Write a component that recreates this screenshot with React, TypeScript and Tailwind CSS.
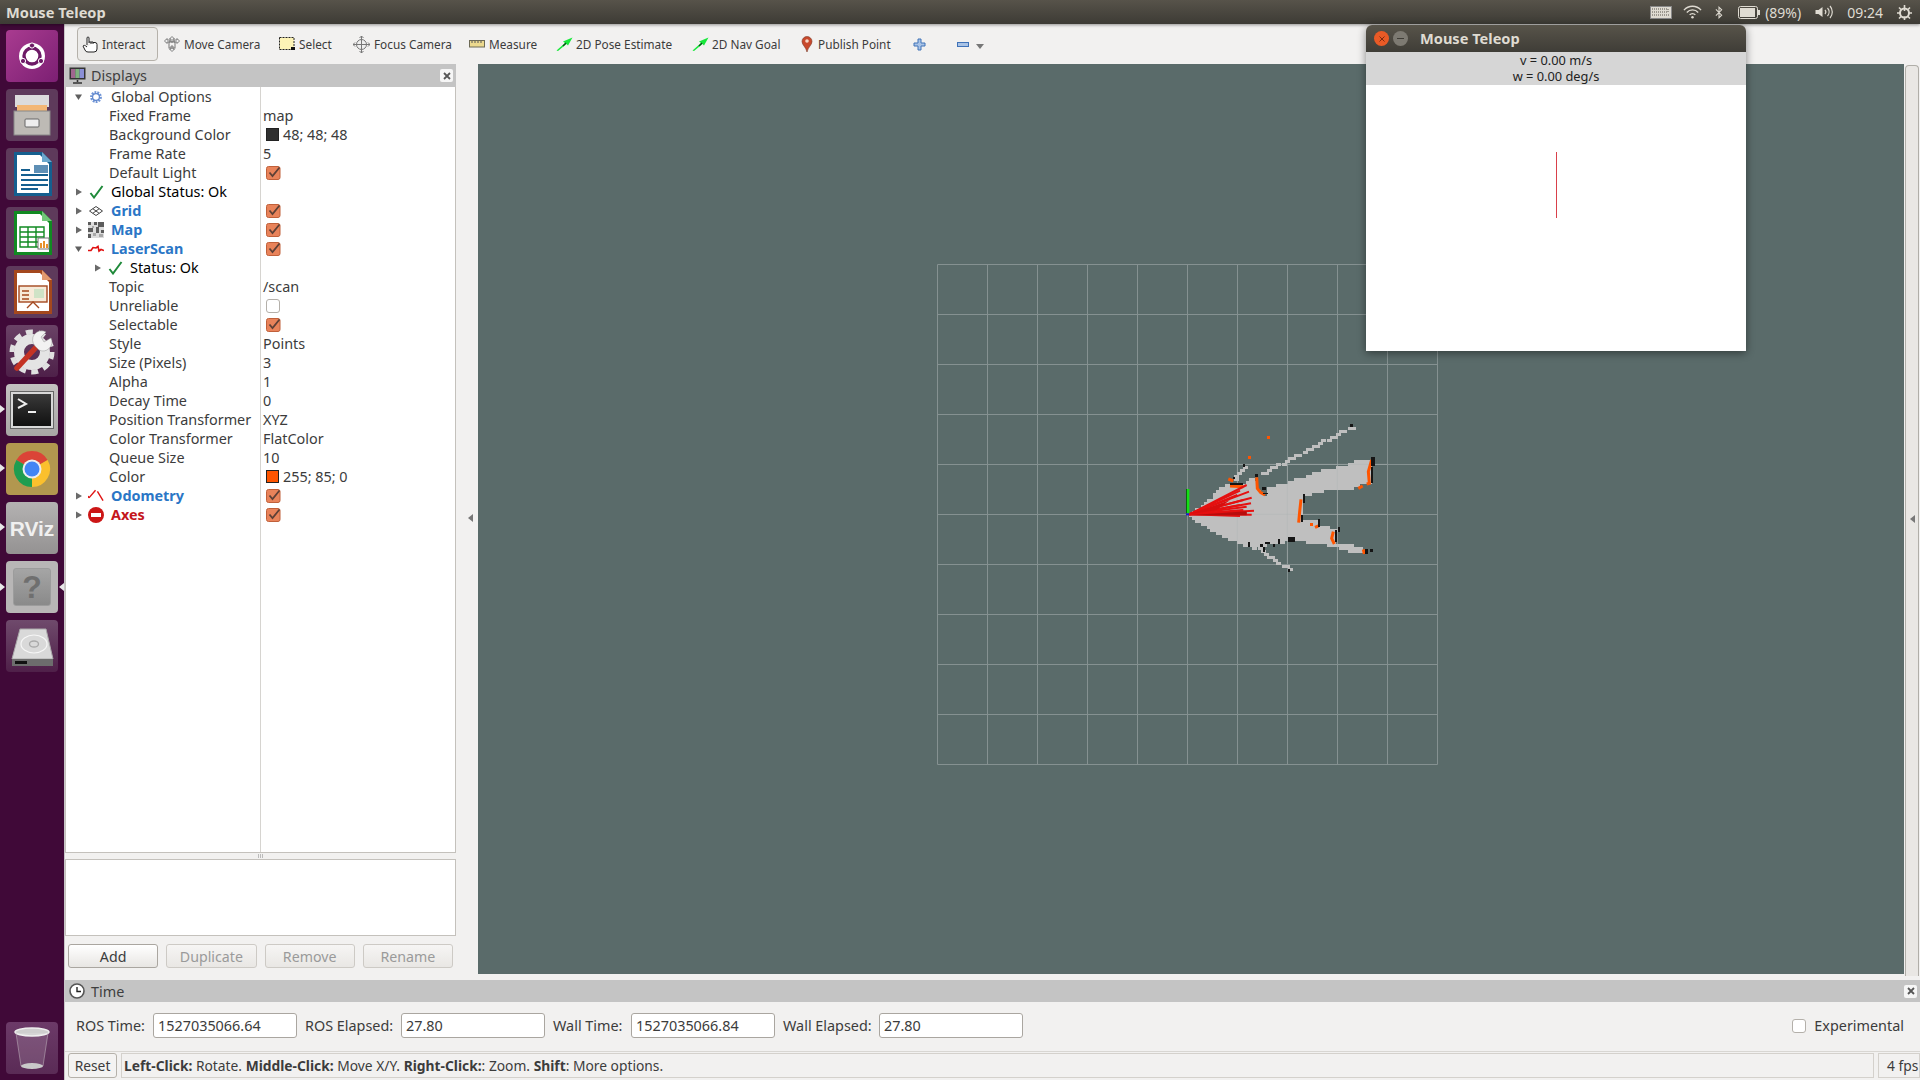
import type { ReactNode } from "react";

const FONT = "font-['Noto_Sans','Open_Sans',sans-serif]";

function Chk({ on = true }: { on?: boolean }) {
  if (!on)
    return <span className="block w-[14px] h-[14px] rounded-[3px] border border-[#b4b0aa] bg-white" />;
  return (
    <svg width="16" height="16" viewBox="0 0 16 16" className="block">
      <rect x="0.5" y="1.5" width="13.5" height="13" rx="2" fill="#e9835a" stroke="#c0603a" />
      <path d="M3.5 7.5 L6.5 11 L13.5 2.5" fill="none" stroke="#5e4036" strokeWidth="1.8" />
    </svg>
  );
}

function Arrow({ open }: { open?: boolean }) {
  return (
    <svg width="8" height="8" viewBox="0 0 8 8" className="block">
      {open ? <path d="M0 1.5 H7 L3.5 7 Z" fill="#5f5f5f" /> : <path d="M1 0.5 V7.5 L7 4 Z" fill="#6a6a6a" />}
    </svg>
  );
}

function CheckMark() {
  return (
    <svg width="15" height="14" viewBox="0 0 15 14" className="block">
      <path d="M1.5 8 L5 12.5 L13.5 1" fill="none" stroke="#1f8a3a" strokeWidth="2" />
    </svg>
  );
}

function GearIcon() {
  return (
    <svg width="14" height="14" viewBox="0 0 14 14" className="block">
      <circle cx="7" cy="7" r="4.6" fill="none" stroke="#6f94d6" strokeWidth="2.6" strokeDasharray="1.8 1" />
      <circle cx="7" cy="7" r="3.4" fill="none" stroke="#5d85cc" strokeWidth="1.2" />
    </svg>
  );
}

function GridIcon() {
  return (
    <svg width="14" height="10" viewBox="0 0 14 10" className="block">
      <path d="M7 .5 L13.5 5 L7 9.5 L.5 5 Z M3.8 2.7 L10.2 7.3 M10.2 2.7 L3.8 7.3" fill="none" stroke="#444" strokeWidth="1" />
    </svg>
  );
}

function MapIcon() {
  return (
    <svg width="16" height="16" viewBox="0 0 16 16" className="block" shapeRendering="crispEdges">
      <rect width="16" height="16" fill="#dcdcdc" />
      <path d="M0 0h3v3H0zM6 0h3v3H6zM10 0h6v5h-6zM0 6h5v4H0zM8 5h3v6H8zM0 12h3v4H0zM13 8h3v3h-3z" fill="#5c5c5c" />
      <path d="M4 4h2v2H4zM5 11h3v3H5zM11 12h4v3h-4z" fill="#a8a8a8" />
    </svg>
  );
}

function LaserIcon() {
  return (
    <svg width="16" height="8" viewBox="0 0 16 8" className="block">
      <path d="M0 5.5 H3 L5 2.5 L8 3 L10 1.5 L11 6 L13 4.5 L16 5.5" fill="none" stroke="#e01010" strokeWidth="1.6" />
    </svg>
  );
}

function OdomIcon() {
  return (
    <svg width="17" height="13" viewBox="0 0 17 13" className="block">
      <path d="M1 9 L8 1 M1 9 L0 7 M10 2 L16 12" fill="none" stroke="#e01414" strokeWidth="1.5" />
    </svg>
  );
}

function StopIcon() {
  return (
    <svg width="16" height="16" viewBox="0 0 16 16" className="block">
      <circle cx="8" cy="8" r="8" fill="#cc1616" />
      <rect x="3" y="6" width="10" height="4" fill="#fff" />
    </svg>
  );
}

type Row = {
  label: string;
  value?: string;
  swatch?: string;
  check?: boolean;
  arrow?: "open" | "closed";
  indent?: number;
  icon?: ReactNode;
  tone?: "plain" | "blue" | "red" | "dark";
};

const rows: Row[] = [
  { label: "Global Options", arrow: "open", icon: <GearIcon />, tone: "plain" },
  { label: "Fixed Frame", value: "map", indent: 1 },
  { label: "Background Color", value: "48; 48; 48", swatch: "#303030", indent: 1 },
  { label: "Frame Rate", value: "5", indent: 1 },
  { label: "Default Light", check: true, indent: 1 },
  { label: "Global Status: Ok", arrow: "closed", icon: <CheckMark />, tone: "dark" },
  { label: "Grid", arrow: "closed", icon: <GridIcon />, tone: "blue", check: true },
  { label: "Map", arrow: "closed", icon: <MapIcon />, tone: "blue", check: true },
  { label: "LaserScan", arrow: "open", icon: <LaserIcon />, tone: "blue", check: true },
  { label: "Status: Ok", arrow: "closed", icon: <CheckMark />, tone: "dark", indent: 2 },
  { label: "Topic", value: "/scan", indent: 1 },
  { label: "Unreliable", check: false, indent: 1 },
  { label: "Selectable", check: true, indent: 1 },
  { label: "Style", value: "Points", indent: 1 },
  { label: "Size (Pixels)", value: "3", indent: 1 },
  { label: "Alpha", value: "1", indent: 1 },
  { label: "Decay Time", value: "0", indent: 1 },
  { label: "Position Transformer", value: "XYZ", indent: 1 },
  { label: "Color Transformer", value: "FlatColor", indent: 1 },
  { label: "Queue Size", value: "10", indent: 1 },
  { label: "Color", value: "255; 85; 0", swatch: "#ff5500", indent: 1 },
  { label: "Odometry", arrow: "closed", icon: <OdomIcon />, tone: "blue", check: true },
  { label: "Axes", arrow: "closed", icon: <StopIcon />, tone: "red", check: true },
];

function TreeRow({ r }: { r: Row }) {
  let labelCls = "text-[#3c3c3c]";
  if (r.tone === "blue") labelCls = "font-bold text-[#2a76c6]";
  if (r.tone === "red") labelCls = "font-bold text-[#c4161c]";
  if (r.tone === "dark") labelCls = "text-black";
  return (
    <div className="flex h-[19px] items-center">
      <div className="flex w-[194px] shrink-0 items-center h-full overflow-hidden">
        {r.indent === 1 ? (
          <span className="pl-[43px] whitespace-nowrap">{r.label}</span>
        ) : (
          <>
            <span className={`${r.indent === 2 ? "ml-[28px]" : "ml-[9px]"} w-[8px]`}>
              {r.arrow && <Arrow open={r.arrow === "open"} />}
            </span>
            <span className="ml-[5px] w-[16px] flex justify-center">{r.icon}</span>
            <span className={`ml-[7px] whitespace-nowrap ${labelCls}`}>{r.label}</span>
          </>
        )}
      </div>
      <div className="flex items-center pl-[3px] h-full whitespace-nowrap">
        {r.swatch && (
          <span className={`${r.swatch === "#303030" ? "bg-[#303030]" : "bg-[#ff5500]"} block w-[13px] h-[13px] border border-[#222] ml-[3px] mr-[4px]`} />
        )}
        {r.value}
        {r.check !== undefined && (
          <span className="ml-[3px]">
            <Chk on={r.check} />
          </span>
        )}
      </div>
    </div>
  );
}

function ToolBtn({ icon, label, w, gap }: { icon: ReactNode; label: string; w: string; gap: string }) {
  return (
    <div className={`flex items-center h-[34px] shrink-0 whitespace-nowrap ${w} ${gap}`}>
      {icon}
      <span>{label}</span>
    </div>
  );
}

function HandIcon() {
  return (
    <svg width="17" height="17" viewBox="0 0 17 17" className="block">
      <path d="M5 9 V2 a1 1 0 0 1 2 0 V7 M7 6 h2 V8 M9 6 h2 V8 M11 6.5 h2 a2 2 0 0 1 2 2 V13 a3 3 0 0 1-3 3 H6 a3 3 0 0 1-3-2 L1 10 c.5-1 2-1 4 1" fill="#fff" stroke="#222" strokeWidth="1" />
    </svg>
  );
}

function MoveIcon() {
  return (
    <svg width="16" height="16" viewBox="0 0 16 16" className="block">
      <path d="M8 .5 L10.5 3 H9 V6 H7 V3 H5.5 Z M8 15.5 L5.5 13 H7 V10 H9 V13 H10.5 Z M.5 5 L3 2.5 V4 H6 V6 H3 V7.5 Z M15.5 5 L13 7.5 V6 H10 V4 H13 V2.5 Z" fill="#eee" stroke="#666" strokeWidth=".8" />
      <rect x="5" y="6" width="6" height="6" fill="none" stroke="#777" />
    </svg>
  );
}

function SelectIcon() {
  return (
    <svg width="16" height="14" viewBox="0 0 16 14" className="block">
      <rect x=".5" y=".5" width="14.5" height="12" fill="#fdf3b6" stroke="#222" strokeDasharray="2 1" />
      <rect x="12" y="10" width="4" height="3" fill="#111" />
    </svg>
  );
}

function FocusIcon() {
  return (
    <svg width="17" height="17" viewBox="0 0 17 17" className="block">
      <circle cx="8.5" cy="8.5" r="5" fill="#eee" stroke="#777" />
      <path d="M8.5 0 V17 M0 8.5 H17" stroke="#777" strokeWidth="1" />
      <path d="M6.5 2 L8.5 0 L10.5 2 M6.5 15 L8.5 17 L10.5 15 M2 6.5 L0 8.5 L2 10.5 M15 6.5 L17 8.5 L15 10.5" fill="none" stroke="#777" />
    </svg>
  );
}

function RulerIcon() {
  return (
    <svg width="16" height="8" viewBox="0 0 16 8" className="block">
      <rect x=".5" y=".5" width="15" height="6.5" fill="#ecd98e" stroke="#6d6a55" />
      <path d="M3 1 V3 M6 1 V3 M9 1 V3 M12 1 V3" stroke="#555" />
    </svg>
  );
}

function GreenArrow() {
  return (
    <svg width="17" height="14" viewBox="0 0 17 14" className="block">
      <path d="M0.5 13.5 L9 6 L7 4.5 L16.5 .5 L12 8.5 L10.5 7 L2 14 Z" fill="#17e83a" />
      <path d="M7 9 L10 6" stroke="#0a4a18" strokeWidth="1.2" />
    </svg>
  );
}

function PinIcon() {
  return (
    <svg width="12" height="16" viewBox="0 0 12 16" className="block">
      <path d="M6 16 C5 11 1 9 1 5.5 A5 5 0 0 1 11 5.5 C11 9 7 11 6 16 Z" fill="#c8492c" stroke="#7d3a28" strokeWidth=".6" />
      <circle cx="6" cy="5" r="1.8" fill="#f6d9c8" />
    </svg>
  );
}

function FlatBtn({ label, on }: { label: string; on?: boolean }) {
  return (
    <div
      className={
        on
          ? "flex-1 h-[24px] flex items-center justify-center rounded-[3px] border border-[#aaa6a0] bg-gradient-to-b from-white to-[#e8e6e3] text-[#3c3c3c]"
          : "flex-1 h-[24px] flex items-center justify-center rounded-[3px] border border-[#cdcac5] bg-gradient-to-b from-[#f6f5f4] to-[#e9e7e4] text-[#9a9a9a]"
      }
    >
      {label}
    </div>
  );
}

function TimeField({ label, value, lw }: { label: string; value: string; lw: string }) {
  return (
    <>
      <span className={`whitespace-nowrap ${lw}`}>{label}</span>
      <span className="w-[144px] h-[25px] flex items-center pl-[4px] rounded-[3px] border border-[#aaa6a0] bg-white">{value}</span>
    </>
  );
}

function Panel({ children, cls }: { children: ReactNode; cls: string }) {
  return <div className={`w-[52px] h-[52px] shrink-0 rounded-[4px] flex items-center justify-center overflow-hidden ${cls}`}>{children}</div>;
}

function Launcher() {
  return (
    <div className="w-[65px] shrink-0 flex flex-col items-center pt-[6px] bg-[#400938] border-r border-r-[#c9c6c8] relative">
      <div className="flex flex-col gap-[7px]">
        <Panel cls="bg-gradient-to-br from-[#a93b90] to-[#7c1f73]">
          <svg width="44" height="44" viewBox="0 0 44 44">
            <circle cx="22" cy="22" r="13" fill="#fff" />
            <circle cx="22" cy="22" r="8" fill="none" stroke="#6d1a66" strokeWidth="3.4" />
            <circle cx="22" cy="11.5" r="2.6" fill="#6d1a66" stroke="#fff" />
            <circle cx="13" cy="27" r="2.6" fill="#6d1a66" stroke="#fff" />
            <circle cx="31" cy="27" r="2.6" fill="#6d1a66" stroke="#fff" />
          </svg>
        </Panel>
        <Panel cls="bg-[#5e3a5b]">
          <svg width="44" height="44" viewBox="0 0 44 44">
            <rect x="5" y="2" width="34" height="12" fill="#dcdcdc" />
            <rect x="7" y="12" width="30" height="10" fill="#f3b775" />
            <rect x="4" y="18" width="36" height="24" fill="#bdbab5" stroke="#888" />
            <rect x="15" y="26" width="14" height="8" rx="1" fill="#eee" stroke="#666" />
          </svg>
        </Panel>
        <Panel cls="bg-[#5e3a5b]">
          <svg width="44" height="48" viewBox="0 0 44 48">
            <path d="M4 2 H32 L42 12 V46 H4 Z" fill="#155f8f" />
            <path d="M7 5 H30 L39 14 V43 H7 Z" fill="#fff" />
            <path d="M32 2 L42 12 H32 Z" fill="#6aa7cc" />
            <path d="M11 20 H20 M11 25 H38 M11 30 H38 M11 35 H38 M11 39 H28" stroke="#155f8f" strokeWidth="2" />
            <rect x="24" y="15" width="14" height="8" fill="#5e8fb5" />
          </svg>
        </Panel>
        <Panel cls="bg-[#5e3a5b]">
          <svg width="44" height="48" viewBox="0 0 44 48">
            <path d="M4 2 H32 L42 12 V46 H4 Z" fill="#118a22" />
            <path d="M7 5 H30 L39 14 V43 H7 Z" fill="#fff" />
            <path d="M32 2 L42 12 H32 Z" fill="#70c778" />
            <path d="M10 18 H34 V38 H10 Z M10 23 H34 M10 28 H34 M10 33 H34 M18 18 V38 M26 18 V38" fill="none" stroke="#118a22" strokeWidth="1.4" />
            <rect x="28" y="29" width="11" height="11" fill="#fff" stroke="#777" />
            <path d="M31 39 V34 M34 39 V32 M37 39 V35" stroke="#e8912c" strokeWidth="2" />
          </svg>
        </Panel>
        <Panel cls="bg-[#5e3a5b]">
          <svg width="44" height="48" viewBox="0 0 44 48">
            <path d="M4 2 H32 L42 12 V46 H4 Z" fill="#a4481e" />
            <path d="M7 5 H30 L39 14 V43 H7 Z" fill="#fff" />
            <path d="M32 2 L42 12 H32 Z" fill="#e39a6e" />
            <rect x="9" y="18" width="28" height="16" fill="#f7ead9" stroke="#a4481e" strokeWidth="1.4" />
            <path d="M12 23 H19 M12 27 H19 M12 31 H19 M17 40 L23 34 L29 40" stroke="#a4481e" strokeWidth="1.4" fill="none" />
            <rect x="24" y="21" width="10" height="9" fill="#cfe3c6" />
          </svg>
        </Panel>
        <Panel cls="bg-gradient-to-b from-[#6a4266] to-[#4e2049]">
          <svg width="48" height="48" viewBox="0 0 48 48">
            <circle cx="24" cy="25" r="13" fill="none" stroke="#e4e4e4" strokeWidth="10" />
            <circle cx="24" cy="25" r="20" fill="none" stroke="#e0e0e0" strokeWidth="5" strokeDasharray="7 5.5" />
            <path d="M9 41 L31 17" stroke="#c43324" strokeWidth="5.5" strokeLinecap="round" />
            <path d="M27 19 A9 9 0 0 1 38 5 L33 10 L36 15 L43 11 A9 9 0 0 1 31 23 Z" fill="#f2f2f2" stroke="#999" strokeWidth=".5" />
          </svg>
        </Panel>
        <Panel cls="bg-gradient-to-b from-[#c4c2c1] to-[#a8a6a5]">
          <div className="w-[42px] h-[36px] bg-gradient-to-b from-[#3a3a3a] to-[#111] border-2 border-[#d8d8d8] shadow-[0_0_0_1px_#666] flex items-start">
            <svg width="38" height="32" viewBox="0 0 38 32">
              <path d="M5 5 L13 10 L5 14" fill="none" stroke="#eee" strokeWidth="2" />
              <path d="M15 18 H23" stroke="#eee" strokeWidth="2" />
            </svg>
          </div>
        </Panel>
        <Panel cls="bg-[#b2974f]">
          <svg width="44" height="44" viewBox="0 0 44 44">
            <path d="M22 22 L6.4 13 A18 18 0 0 1 37.6 13 Z" fill="#db4437" />
            <path d="M22 22 L37.6 13 A18 18 0 0 1 22 40 Z" fill="#fbc02d" />
            <path d="M22 22 L22 40 A18 18 0 0 1 6.4 13 Z" fill="#1f9d50" />
            <circle cx="22" cy="22" r="9.5" fill="#eee" />
            <circle cx="22" cy="22" r="7.5" fill="#4285f4" />
          </svg>
        </Panel>
        <Panel cls="bg-gradient-to-b from-[#b4b2b2] to-[#949292]">
          <span className="text-[21px] leading-none font-bold text-[#f0f0f0] font-['Liberation_Sans',sans-serif]">RViz</span>
        </Panel>
        <Panel cls="bg-[#b8b6b6]">
          <div className="w-[38px] h-[38px] rounded-[3px] bg-gradient-to-b from-[#a5a5a5] to-[#8a8a8a] border border-[#9c9c9c] flex items-center justify-center text-[32px] leading-none font-bold text-[#6f6f6f] font-['Liberation_Sans',sans-serif]">
            ?
          </div>
        </Panel>
        <Panel cls="bg-gradient-to-b from-[#6f4a6c] to-[#4f2049]">
          <svg width="46" height="44" viewBox="0 0 46 44">
            <path d="M11 5 H37 L44 35 H3 Z" fill="#d9d9d9" stroke="#aaa" />
            <path d="M3 35 H44 V42 H3 Z" fill="#6d6d6d" />
            <rect x="6" y="37" width="12" height="3" fill="#111" />
            <ellipse cx="25" cy="20" rx="13" ry="9" fill="none" stroke="#f6f6f6" strokeWidth="1.2" />
            <ellipse cx="25" cy="20" rx="4.5" ry="3" fill="none" stroke="#aaa" strokeWidth="1.4" />
          </svg>
        </Panel>
      </div>
      <div className="mt-auto mb-[6px]">
        <Panel cls="bg-gradient-to-b from-[#6c3a68] to-[#5a2b56]">
          <svg width="40" height="48" viewBox="0 0 40 48">
            <ellipse cx="20" cy="8" rx="17" ry="4" fill="#cfcfcf" stroke="#eee" strokeWidth="1.5" />
            <path d="M4 9 L9 42 H31 L36 9" fill="#fff" fillOpacity=".14" stroke="#b9a9b6" strokeWidth=".6" />
            <ellipse cx="20" cy="42" rx="11" ry="3" fill="#c9c9c9" />
          </svg>
        </Panel>
      </div>
      {/* running app markers */}
      <span className="absolute left-0 top-[381px] border-y-[4px] border-y-transparent border-l-[5px] border-l-[#e8e8e8]" />
      <span className="absolute left-0 top-[440px] border-y-[4px] border-y-transparent border-l-[5px] border-l-[#e8e8e8]" />
      <span className="absolute left-0 top-[499px] border-y-[4px] border-y-transparent border-l-[5px] border-l-[#e8e8e8]" />
      <span className="absolute left-0 top-[559px] border-y-[4px] border-y-transparent border-l-[5px] border-l-[#e8e8e8]" />
      <span className="absolute right-0 top-[559px] border-y-[4px] border-y-transparent border-r-[5px] border-r-[#e8e8e8]" />
    </div>
  );
}

// everything in the map group is in units of 1/3 px, snapped to the 3px map cell
const CELL = 9;
const snap = (v: number) => Math.round(v / CELL) * CELL;

function stepped(pts: number[][]) {
  let d = "";
  for (let i = 0; i < pts.length; i++) {
    const [x1, y1] = pts[i];
    const [x2, y2] = pts[(i + 1) % pts.length];
    const n = Math.max(1, Math.ceil(Math.max(Math.abs(x2 - x1), Math.abs(y2 - y1)) / CELL));
    for (let k = 0; k < n; k++) {
      const x = snap(x1 + ((x2 - x1) * k) / n);
      const y = snap(y1 + ((y2 - y1) * k) / n);
      d += d ? `H${x}V${y}` : `M${x} ${y}`;
    }
  }
  return d + "Z";
}

function beam(x1: number, y1: number, x2: number, y2: number, n: number) {
  const out = [];
  for (let i = 0; i <= n; i++) {
    const t = i / n;
    out.push(<rect key={i} x={snap(x1 + (x2 - x1) * t)} y={snap(y1 + (y2 - y1) * t)} width="14" height="8" fill="#bfbfbf" />);
  }
  return out;
}

const floor = [
  [118, 340], [150, 315], [180, 295], [205, 265], [230, 250], [280, 250], [295, 235], [315, 230], [325, 270], [345, 285],
  [355, 262], [405, 250], [430, 238], [525, 208], [555, 202], [600, 188], [630, 180], [665, 175], [670, 250], [640, 255],
  [620, 265], [585, 268], [520, 275], [465, 290], [458, 310], [455, 365], [505, 358], [505, 380], [565, 385], [555, 430],
  [600, 432], [640, 445], [645, 462], [600, 455], [565, 445], [505, 430], [440, 425], [385, 430], [340, 440], [300, 440],
  [265, 430], [225, 412], [190, 395], [170, 380], [145, 365], [118, 348],
];

const blacks = [
  [600, 72, 9, 9], [278, 193, 7, 7], [413, 507, 7, 9], [314, 222, 10, 8], [664, 172, 10, 25], [662, 200, 8, 50],
  [458, 282, 8, 28], [452, 345, 7, 22], [505, 358, 6, 22], [563, 380, 7, 15], [555, 390, 7, 35], [645, 447, 8, 15],
  [660, 447, 9, 9], [415, 410, 20, 16], [385, 418, 5, 14], [295, 426, 5, 14], [345, 426, 15, 6], [338, 440, 6, 16],
  [368, 432, 6, 8], [330, 432, 10, 8], [335, 262, 12, 8], [338, 278, 15, 5], [240, 248, 40, 6], [248, 232, 6, 6],
];

const oranges = [
  "M320 232 L322 265 L332 278 L345 285",
  "M665 180 L655 215 L658 250 L650 252",
  "M625 265 L638 258",
  "M453 298 L449 335 L446 368",
  "M550 395 L545 415 L553 432",
  "M640 448 L643 462",
  "M495 382 L505 378",
  "M235 237 L250 243",
  "M240 258 L280 260",
];

const redEnds = [
  [290, 255], [270, 272], [297, 275], [262, 285], [305, 293], [280, 300], [303, 310], [270, 315], [290, 320],
  [312, 332], [280, 330], [290, 340], [305, 344], [270, 348],
];

function Scene() {
  const lines = [];
  for (let i = 0; i <= 10; i++) {
    lines.push(<path key={"v" + i} d={`M${459.5 + i * 50} 200.5 V700.5`} stroke="#859191" />);
    lines.push(<path key={"h" + i} d={`M459.5 ${200.5 + i * 50} H959.5`} stroke="#859191" />);
  }
  return (
    <svg className="absolute inset-0 w-full h-full">
      <g fill="none">{lines}</g>
      {/* scan crop: (1150,400) on the page, the view starts at (478,64) */}
      <g transform="translate(672 336) scale(.33333)">
        <path d={stepped(floor)} fill="#bfbfbf" shapeRendering="crispEdges" />
        <g shapeRendering="crispEdges">
          {beam(330, 218, 600, 78, 26)}
          {beam(248, 232, 280, 197, 4)}
          {beam(300, 432, 412, 505, 11)}
        </g>
        <path d="M112 343 H712 M262 193 V493 M412 193 V493 M562 193 V493 M112 193 H712" stroke="#adb3b3" strokeWidth="2" fill="none" opacity=".6" />
        <g fill="none" stroke="#ff5500" strokeWidth="9">
          {oranges.map((d) => (
            <path key={d} d={d} />
          ))}
        </g>
        <g shapeRendering="crispEdges" fill="#151515">
          {blacks.map(([x, y, w, h], i) => (
            <rect key={i} x={x} y={y} width={w} height={h} />
          ))}
        </g>
        <g fill="#ff5500" shapeRendering="crispEdges">
          <rect x="294" y="168" width="9" height="9" />
          <rect x="351" y="108" width="9" height="9" />
          <rect x="480" y="369" width="9" height="9" />
        </g>
        {redEnds.map(([x, y]) => (
          <path key={x + "-" + y} d={`M118 343 L${x} ${y}`} stroke="#e51010" strokeWidth="6" />
        ))}
        <path d="M118 346 L290 346 L290 334 Z" fill="#b80c0c" />
        <path d="M118 343 L240 300 L200 330 Z" fill="#d80e0e" />
        <rect x="108" y="267" width="3" height="73" fill="#0a6a0a" />
        <rect x="111" y="267" width="7" height="73" fill="#14e014" />
        <rect x="108" y="340" width="9" height="6" fill="#1a1ad0" />
      </g>
    </svg>
  );
}

export default function App() {
  return (
    <div className={`w-[1920px] h-[1080px] overflow-hidden flex flex-col bg-[#f2f1f0] text-[14.4px] leading-[19px] text-[#3c3c3c] relative ${FONT}`}>
      {/* top panel */}
      <div className="h-[24px] shrink-0 relative z-10 flex items-center justify-between pl-[6px] pr-[8px] bg-gradient-to-b from-[#57534a] to-[#3d3b35] text-[#dfdbd2] shadow-[0_1px_3px_rgba(0,0,0,0.4)]">
        <span className="font-bold text-[14.6px]">Mouse Teleop</span>
        <div className="flex items-center text-[14px]">
          <svg width="22" height="13" viewBox="0 0 22 13" className="block">
            <rect x=".5" y=".5" width="21" height="12" fill="#dfdbd2" stroke="#888" />
            <path d="M2 3 H17 M2 6 H17 M2 9 H20 M18 3 V7" stroke="#57534a" strokeDasharray="1 1" />
          </svg>
          <svg width="19" height="14" viewBox="0 0 20 14" className="block ml-[11px]">
            <path d="M1 5 A12 12 0 0 1 19 5 M4 7.5 A8 8 0 0 1 16 7.5 M7 10 A4 4 0 0 1 13 10" fill="none" stroke="#dfdbd2" strokeWidth="1.4" />
            <circle cx="10" cy="12.5" r="1.3" fill="#dfdbd2" />
          </svg>
          <svg width="8" height="15" viewBox="0 0 9 15" className="block ml-[13px]">
            <path d="M1 4 L7.5 10.5 L4.5 13.5 V1.5 L7.5 4.5 L1 11" fill="none" stroke="#dfdbd2" strokeWidth="1.2" />
          </svg>
          <svg width="22" height="13" viewBox="0 0 22 13" className="block ml-[15px]">
            <rect x=".5" y=".5" width="19" height="12" rx="2" fill="none" stroke="#dfdbd2" />
            <rect x="2" y="2" width="15" height="9" fill="#dfdbd2" />
            <rect x="20" y="4" width="2" height="5" fill="#dfdbd2" />
          </svg>
          <span className="ml-[5px]">(89%)</span>
          <svg width="20" height="14" viewBox="0 0 19 14" className="block ml-[13px]">
            <path d="M1 5 H4 L8 2 V12 L4 9 H1 Z" fill="#dfdbd2" />
            <path d="M10.5 5 A3 3 0 0 1 10.5 9 M13 3 A6 6 0 0 1 13 11 M15.5 1 A9 9 0 0 1 15.5 13" fill="none" stroke="#dfdbd2" strokeWidth="1.2" />
          </svg>
          <span className="ml-[13px]">09:24</span>
          <svg width="15" height="15" viewBox="0 0 15 15" className="block ml-[14px]">
            <circle cx="7.5" cy="8" r="4.5" fill="none" stroke="#dfdbd2" strokeWidth="2" />
            <path d="M7.5 0 V6 M7.5 11.5 V15 M0 8 H3 M12 8 H15 M2 2.5 L4 4.5 M13 2.5 L11 4.5 M2 13.5 L4 11.5 M13 13.5 L11 11.5" stroke="#dfdbd2" strokeWidth="1.6" />
          </svg>
        </div>
      </div>

      <div className="flex-1 flex min-h-0">
        <Launcher />

        <div className="flex-1 flex flex-col min-w-0">
          {/* toolbar */}
          <div className="h-[40px] shrink-0 flex items-center pl-[12px] text-[11.8px] bg-[#f2f1f0]">
            <div className="flex items-center gap-[3px] h-[34px] w-[81px] shrink-0 mr-[6px] pl-[4px] rounded-[4px] border border-[#b5b1aa] bg-[#ecebe9]">
              <HandIcon />
              <span>Interact</span>
            </div>
            <ToolBtn w="w-[115px]" gap="gap-[4px]" icon={<MoveIcon />} label="Move Camera" />
            <ToolBtn w="w-[74px]" gap="gap-[4px]" icon={<SelectIcon />} label="Select" />
            <ToolBtn w="w-[116px]" gap="gap-[4px]" icon={<FocusIcon />} label="Focus Camera" />
            <ToolBtn w="w-[87px]" gap="gap-[4px]" icon={<RulerIcon />} label="Measure" />
            <ToolBtn w="w-[136px]" gap="gap-[3px]" icon={<GreenArrow />} label="2D Pose Estimate" />
            <ToolBtn w="w-[109px]" gap="gap-[3px]" icon={<GreenArrow />} label="2D Nav Goal" />
            <ToolBtn w="w-[112px]" gap="gap-[5px]" icon={<PinIcon />} label="Publish Point" />
            <svg width="13" height="13" viewBox="0 0 13 13" className="block">
              <path d="M5 1 H8 V5 H12 V8 H8 V12 H5 V8 H1 V5 H5 Z" fill="#a9c3e6" stroke="#3f72b8" />
            </svg>
            <div className="flex items-center gap-[7px] ml-[31px] mt-[1px]">
              <span className="block w-[12px] h-[5px] bg-[#a9c3e6] border border-[#3f72b8]" />
              <span className="block mt-[4px] border-x-[4px] border-x-transparent border-t-[5px] border-t-[#777]" />
            </div>
          </div>

          {/* middle */}
          <div className="flex-1 flex min-h-0">
            {/* displays panel */}
            <div className="w-[391px] shrink-0 flex flex-col">
              <div className="h-[23px] shrink-0 flex items-center bg-[#c4c4c4] pl-[4px] pr-[3px]">
                <svg width="17" height="17" viewBox="0 0 17 17" className="block">
                  <rect x=".5" y=".5" width="16" height="12" fill="#333" />
                  <rect x="2" y="2" width="4.3" height="9" fill="#a0668f" />
                  <rect x="6.3" y="2" width="4.3" height="9" fill="#7fb07f" />
                  <rect x="10.6" y="2" width="4.4" height="9" fill="#8a8fd6" />
                  <path d="M8.5 13 V15 M4 16 H13" stroke="#333" strokeWidth="1.6" />
                </svg>
                <span className="ml-[5px] text-[14.4px] text-[#3f3f3f]">Displays</span>
                <span className="ml-auto w-[13px] h-[13px] rounded-[2px] bg-[#f6f6f6] flex items-center justify-center">
                  <svg width="8" height="8" viewBox="0 0 8 8" className="block">
                    <path d="M1 1 L7 7 M7 1 L1 7" stroke="#555" strokeWidth="1.8" />
                  </svg>
                </span>
              </div>
              <div className="flex-1 min-h-0 border border-t-0 border-[#c4c1bc] bg-white relative">
                <span className="absolute left-[194px] top-0 bottom-0 w-px bg-[#d6d4d0]" />
                {rows.map((r) => (
                  <TreeRow key={r.label} r={r} />
                ))}
              </div>
              <div className="h-[6px] shrink-0 flex justify-center items-center gap-px">
                <span className="block w-px h-[4px] bg-[#bbb]" />
                <span className="block w-px h-[4px] bg-[#bbb]" />
                <span className="block w-px h-[4px] bg-[#bbb]" />
              </div>
              <div className="h-[77px] shrink-0 border border-[#c4c1bc] bg-white" />
              <div className="h-[44px] shrink-0 flex items-start gap-[8px] pt-[8px] pl-[3px] pr-[3px] text-[14.2px]">
                <FlatBtn on label="Add" />
                <FlatBtn label="Duplicate" />
                <FlatBtn label="Remove" />
                <FlatBtn label="Rename" />
              </div>
            </div>

            {/* collapse handle */}
            <div className="w-[22px] shrink-0 flex items-center justify-center pl-[6px] pb-[8px]">
              <span className="block border-y-[4px] border-y-transparent border-r-[5px] border-r-[#777]" />
            </div>

            {/* 3d view */}
            <div className="flex-1 min-w-0 mb-[6px] bg-[#5a6b6a] relative overflow-hidden">
              <Scene />
            </div>

            {/* right dock handle */}
            <div className="w-[16px] shrink-0 pl-px pt-px pb-[4px]">
              <div className="h-full w-[14px] rounded-t-[4px] border border-b-0 border-[#b0aea8] bg-[#e9e7e4] flex items-center justify-center pb-[4px]">
                <span className="block border-y-[4px] border-y-transparent border-r-[5px] border-r-[#777]" />
              </div>
            </div>
          </div>

          {/* time panel */}
          <div className="h-[22px] shrink-0 flex items-center bg-[#c4c4c4] pl-[4px] pr-[3px]">
            <svg width="16" height="16" viewBox="0 0 16 16" className="block">
              <circle cx="8" cy="8" r="7" fill="#fff" stroke="#555" strokeWidth="1.6" />
              <path d="M8 4 V8.5 H12" fill="none" stroke="#222" strokeWidth="1.4" />
            </svg>
            <span className="ml-[6px] text-[14.4px] text-[#3f3f3f]">Time</span>
            <span className="ml-auto w-[13px] h-[13px] rounded-[2px] bg-[#f6f6f6] flex items-center justify-center">
              <svg width="8" height="8" viewBox="0 0 8 8" className="block">
                <path d="M1 1 L7 7 M7 1 L1 7" stroke="#555" strokeWidth="1.8" />
              </svg>
            </span>
          </div>
          <div className="h-[49px] shrink-0 flex items-center pl-[11px] pr-[16px] gap-[8px] pb-[2px]">
            <TimeField label="ROS Time:" value="1527035066.64" lw="w-[69px]" />
            <TimeField label="ROS Elapsed:" value="27.80" lw="w-[88px]" />
            <TimeField label="Wall Time:" value="1527035066.84" lw="w-[70px]" />
            <TimeField label="Wall Elapsed:" value="27.80" lw="w-[88px]" />
            <div className="ml-auto flex items-center gap-[8px]">
              <span className="block w-[14px] h-[14px] rounded-[3px] border border-[#b4b0aa] bg-white" />
              <span>Experimental</span>
            </div>
          </div>
          <div className="h-[29px] shrink-0 flex items-center gap-[4px] pl-[3px] pb-[1px] border-t border-[#d8d6d2] text-[13.8px]">
            <div className="h-[25px] w-[49px] shrink-0 flex items-center justify-center rounded-[3px] border border-[#b5b1aa] bg-[#f4f3f2]">Reset</div>
            <div className="flex-1 h-[25px] flex items-center pl-[2px] border border-[#d4d1cc]">
              <span>
                <b>Left-Click:</b> Rotate. <b>Middle-Click:</b> Move X/Y. <b>Right-Click:</b>: Zoom. <b>Shift</b>: More options.
              </span>
            </div>
            <div className="w-[42px] h-[25px] shrink-0 flex items-center pl-[8px] border border-[#d4d1cc] overflow-hidden whitespace-nowrap">4 fps</div>
          </div>
        </div>
      </div>

      {/* floating teleop window */}
      <div className="absolute z-20 left-[1366px] top-[25px] w-[380px] h-[326px] flex flex-col rounded-t-[6px] overflow-hidden shadow-[0_2px_8px_rgba(0,0,0,0.45)]">
        <div className="h-[27px] shrink-0 flex items-center bg-gradient-to-b from-[#58544a] to-[#3f3d37]">
          <span className="ml-[8px] w-[15px] h-[15px] rounded-full bg-[#e95a26] flex items-center justify-center">
            <svg width="6" height="6" viewBox="0 0 6 6" className="block">
              <path d="M.5 .5 L5.5 5.5 M5.5 .5 L.5 5.5" stroke="#7c2b10" strokeWidth="1" />
            </svg>
          </span>
          <span className="ml-[4px] w-[15px] h-[15px] rounded-full bg-[#7d7a72] flex items-center justify-center">
            <span className="block w-[7px] h-px bg-[#3f3d37]" />
          </span>
          <span className="ml-[12px] font-bold text-[14.6px] text-[#dfdbd2]">Mouse Teleop</span>
        </div>
        <div className="h-[33px] shrink-0 bg-[#d6d6d6] flex flex-col items-center justify-center pb-[2px] text-[12.8px] leading-[16px] text-[#222]">
          <span>v = 0.00 m/s</span>
          <span>w = 0.00 deg/s</span>
        </div>
        <div className="flex-1 bg-white flex justify-center items-start pt-[67px]">
          <span className="block w-px h-[66px] bg-[#d9404a]" />
        </div>
      </div>
    </div>
  );
}
